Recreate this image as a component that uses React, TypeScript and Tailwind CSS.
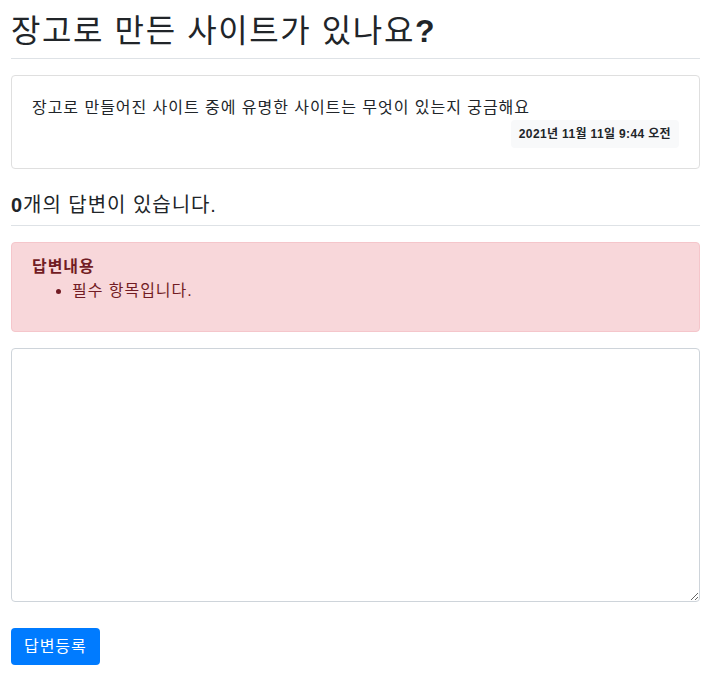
export default function App() {
  return (
    <div
      className="pl-[11px] pr-[17px] text-[#212529] text-base bg-white min-h-[693px] tracking-[0.06em]"
      style={{ fontFamily: '"Liberation Sans", "Noto Sans CJK KR", sans-serif' }}
    >
      <h2 className="mt-3 pb-2 border-b border-[#dee2e6] text-[32px] leading-[38px] font-normal tracking-[0.05em]">
        장고로 만든 사이트가 있나요<span className="font-semibold">?</span>
      </h2>

      <div className="mt-4 border border-[#dfdfdf] rounded p-5">
        <div className="leading-6">
          장고로 만들어진 사이트 중에 유명한 사이트는 무엇이 있는지 궁금해요
        </div>
        <div className="flex justify-end">
          <span className="bg-[#f8f9fa] text-xs leading-3 font-bold px-2 py-2 rounded tracking-[0.03em]">
            2021년 11월 11일 9:44 오전
          </span>
        </div>
      </div>

      <h5 className="mt-4 py-2 border-b border-[#dee2e6] text-xl leading-6 font-normal">
        <span className="font-semibold">0</span>개의 답변이 있습니다.
      </h5>

      <form className="mt-4">
        <div className="bg-[#f8d7da] border border-[#f5c6cb] text-[#721c24] rounded px-5 py-3 mb-4">
          <strong className="block leading-6 font-bold">답변내용</strong>
          <ul className="list-disc pl-10 mb-4 leading-6">
            <li>필수 항목입니다.</li>
          </ul>
        </div>
        <textarea
          rows={10}
          className="block w-full h-[254px] border border-[#ced4da] rounded px-3 py-1.5 leading-6 outline-none"
        />
        <button
          type="button"
          className="mt-[26px] bg-[#007bff] text-white rounded px-[13px] py-1.5 leading-[25px]"
        >
          답변등록
        </button>
      </form>
    </div>
  );
}
